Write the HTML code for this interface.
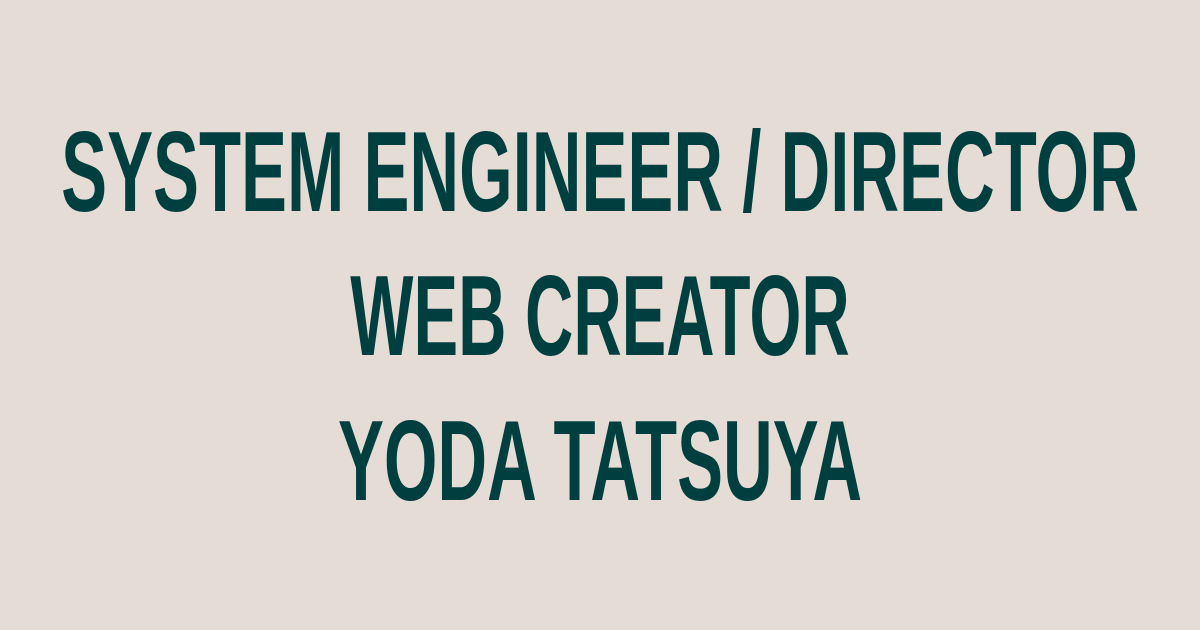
<!DOCTYPE html>
<html><head><meta charset="utf-8"><style>
html,body{margin:0;padding:0}
body{width:1200px;height:630px;background:#e5dcd5;position:relative;overflow:hidden;font-family:"Liberation Sans",sans-serif;font-weight:bold;color:#003f40}
.l{position:absolute;left:0;width:1200px;height:114px;font-size:114px;line-height:114px;white-space:nowrap}
.l span{position:absolute;left:600px;top:0;white-space:nowrap;transform-origin:center}
</style></head><body>
<div class="l" style="top:116px"><span style="transform:translateX(-50%) scaleX(0.604)">SYSTEM ENGINEER / DIRECTOR</span></div>
<div class="l" style="top:260px"><span style="transform:translateX(-50%) scaleX(0.587)">WEB CREATOR</span></div>
<div class="l" style="top:405px"><span style="transform:translateX(-50%) scaleX(0.604)">YODA TATSUYA</span></div>
</body></html>
